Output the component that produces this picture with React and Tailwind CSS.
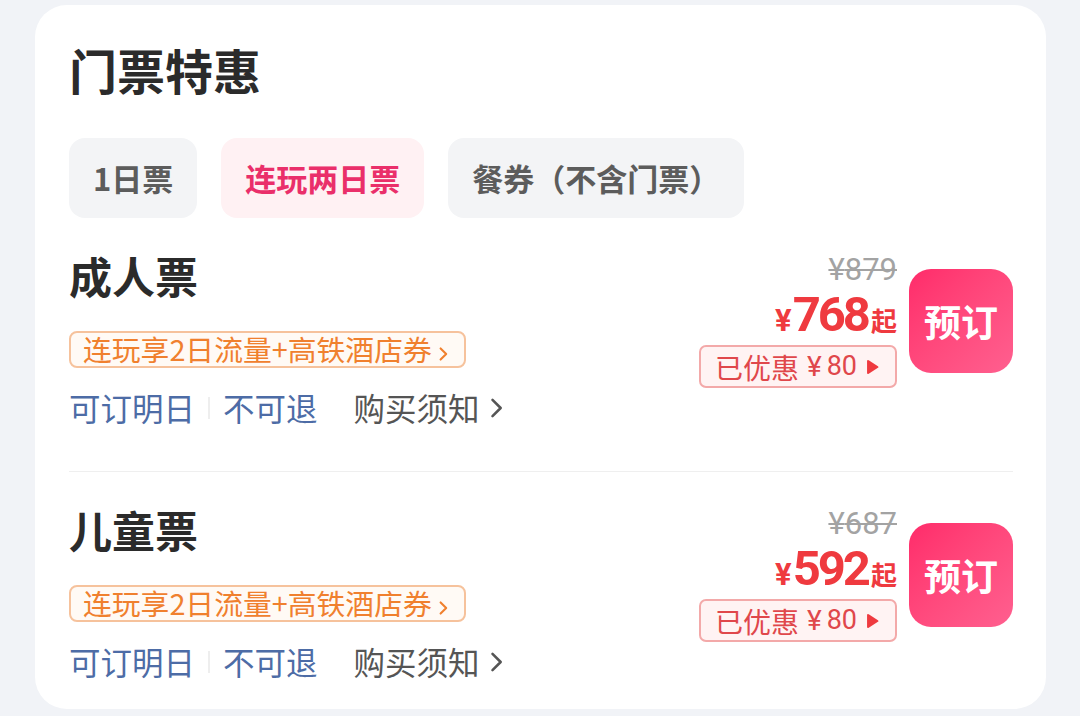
import React from "react";

const CJK = { fontFamily: '"Noto Sans CJK SC", "Noto Sans", sans-serif' };
const RB = { fontFamily: 'Roboto, "Noto Sans CJK SC", sans-serif' };

function Chevron({ className, w = 2.4 }) {
  return (
    <svg viewBox="0 0 12 20" className={className} fill="none" stroke="currentColor" strokeWidth={w} strokeLinecap="round" strokeLinejoin="round">
      <path d="M3 3l7 7-7 7" />
    </svg>
  );
}

function Row({ name, orig, price, last }) {
  return (
    <div className={`flex justify-between items-start pt-[36px] ${last ? "pb-0" : "pb-[48px] border-b border-[#efefef]"}`}>
      <div className="flex flex-col items-start">
        <div className="text-[43px] leading-[43px] font-bold text-[#2b2b2b]">{name}</div>
        <div className="mt-[34px] h-[37px] flex items-center pl-[12px] pr-[16px] rounded-[8px] border-2 border-[#f6c29c] bg-[#fffaf5] text-[#f0802e] text-[28.8px] leading-none">
          <span>连玩享2日流量+高铁酒店券</span>
          <Chevron className="w-[10px] h-[16px] ml-[6px] mt-[8px]" w={2.6} />
        </div>
        <div className="mt-[24px] flex items-center text-[31.5px] leading-[31px]">
          <span className="text-[#4d6ca6]">可订明日</span>
          <span className="mx-[13px] w-[2px] h-[22px] bg-[#eeeeee]" />
          <span className="text-[#4d6ca6]">不可退</span>
          <span className="ml-[36px] text-[#555555]">购买须知</span>
          <Chevron className="w-[14px] h-[24px] ml-[9px] text-[#555555]" w={2.2} />
        </div>
      </div>
      <div className="flex items-center gap-[12px]">
        <div className="flex flex-col items-end">
          <div className="text-[31px] leading-[31px] text-[#a3a3a3] line-through decoration-[2px]" style={RB}>
            ¥{orig}
          </div>
          <div className="mt-[6px] flex items-baseline text-[#ef3a3f] font-bold leading-[48px]">
            <span className="text-[31px] mr-[1px]" style={RB}>¥</span>
            <span className="text-[49px] tracking-[-3px] mr-[3px]" style={RB}>{price}</span>
            <span className="text-[26px]">起</span>
          </div>
          <div className="mt-[0px] h-[43px] flex items-center pl-[14px] pr-[16px] rounded-[7px] border-2 border-[#f3a9a9] bg-[#fff3f3] text-[#e0474b] text-[28px] leading-none">
            <span>已优惠</span>
            <span className="ml-[8px] text-[28px]" style={RB}>¥</span>
            <span className="ml-[5px] text-[27px]" style={RB}>80</span>
            <svg viewBox="0 0 12 14" className="w-[13px] h-[16px] ml-[9px]" fill="#ef3a3f">
              <path d="M1 1.5v11a1 1 0 0 0 1.5.8l8.5-5.5a1 1 0 0 0 0-1.6L2.5.7A1 1 0 0 0 1 1.5z" />
            </svg>
          </div>
        </div>
        <button className="w-[104px] h-[104px] rounded-[22px] bg-gradient-to-br from-[#ff2a6a] to-[#ff5f8f] text-white text-[37px] font-bold leading-none flex items-center justify-center">
          预订
        </button>
      </div>
    </div>
  );
}

export default function App() {
  return (
    <div className="w-[1080px] h-[716px] bg-[#f1f3f7] pt-[5px] pl-[35px] overflow-hidden" style={CJK}>
      <div className="w-[1011px] bg-white rounded-[32px] pt-[40px] pl-[34px] pr-[33px] pb-[32px]">
        <div className="text-[48px] leading-[48px] font-bold text-[#2b2b2b]">门票特惠</div>
        <div className="mt-[45px] flex gap-[24px]">
          <div className="h-[80px] px-[24px] rounded-[16px] bg-[#f3f4f6] text-[#5c5c5c] text-[31px] font-bold flex items-center">1日票</div>
          <div className="h-[80px] px-[24px] rounded-[16px] bg-[#fff1f3] text-[#ea2f6a] text-[31px] font-bold flex items-center">连玩两日票</div>
          <div className="h-[80px] px-[24px] rounded-[16px] bg-[#f3f4f6] text-[#5c5c5c] text-[31px] font-bold flex items-center">餐券（不含门票）</div>
        </div>
        <Row name="成人票" orig="879" price="768" />
        <Row name="儿童票" orig="687" price="592" last />
      </div>
    </div>
  );
}
